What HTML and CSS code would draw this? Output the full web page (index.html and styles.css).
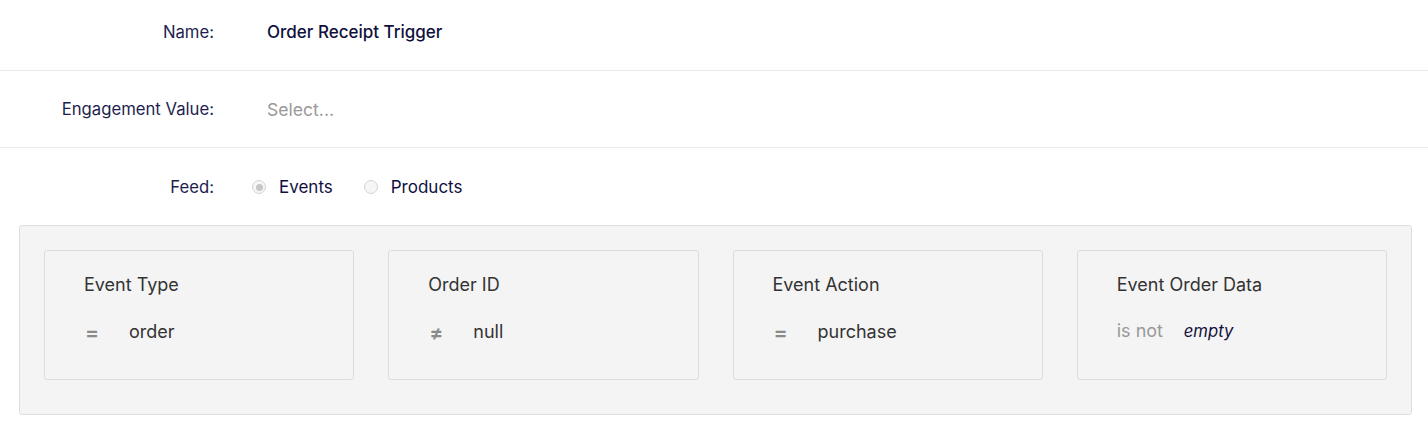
FILE: index.html
```html
<!DOCTYPE html>
<html>
<head>
<meta charset="utf-8">
<link rel="stylesheet" href="styles.css">
</head>
<body>
<div class="form">
  <div class="row row-name">
    <div class="label">Name:</div>
    <div class="value strong">Order Receipt Trigger</div>
  </div>
  <div class="row row-eng">
    <div class="label">Engagement Value:</div>
    <div class="value placeholder">Select...</div>
  </div>
  <div class="row row-feed">
    <div class="label">Feed:</div>
    <div class="value radios">
      <label class="radio"><span class="dot checked"></span>Events</label>
      <label class="radio"><span class="dot"></span>Products</label>
    </div>
  </div>
  <div class="panel">
    <div class="card">
      <div class="title">Event Type</div>
      <div class="cond"><span class="op">=</span><span class="val">order</span></div>
    </div>
    <div class="card">
      <div class="title">Order ID</div>
      <div class="cond"><span class="op">≠</span><span class="val">null</span></div>
    </div>
    <div class="card">
      <div class="title">Event Action</div>
      <div class="cond"><span class="op">=</span><span class="val">purchase</span></div>
    </div>
    <div class="card">
      <div class="title">Event Order Data</div>
      <div class="cond"><span class="op word">is not</span><span class="val em">empty</span></div>
    </div>
  </div>
</div>
</body>
</html>
```
FILE: styles.css
```css
* { box-sizing: border-box; }
body {
  margin: 0;
  background: #fff;
  font-family: Inter, "Noto Sans", sans-serif;
  color: #1c1c4c;
}
.row {
  display: grid;
  grid-template-columns: 214px 1fr;
  column-gap: 53px;
  align-items: center;
  border-bottom: 1px solid #e9e9e9;
}
.row-name { height: 71px; padding-bottom: 6px; }
.row-eng { height: 77px; }
.row-feed { border-bottom: none; height: 77px; padding-bottom: 0; align-items: start; padding-top: 29px; }
.label {
  text-align: right;
  font-size: 16.7px;
  color: #1e1e50;
}
.value { font-size: 17px; }
.strong { font-weight: 500; color: #10103e; }
.placeholder { color: #999; font-size: 17.6px; }
.radios { display: flex; gap: 31px; margin-left: -15px; font-size: 17px; color: #10103e; }
.radio { display: flex; align-items: center; gap: 13px; }
.dot {
  width: 14px; height: 14px; border-radius: 50%;
  border: 1px solid #d4d4d4; background: #f6f6f6;
  display: inline-block; position: relative;
}
.dot.checked::after {
  content: ""; position: absolute; left: 2.5px; top: 2.5px;
  width: 7px; height: 7px; border-radius: 50%; background: #c6c6c6;
}
.panel {
  margin: 0 16px 0 19px;
  background: #f4f4f4;
  border: 1px solid #dedede;
  border-radius: 3px;
  padding: 24px 24px 34px;
  display: grid;
  grid-template-columns: repeat(4, 1fr);
  column-gap: 34px;
}
.card {
  border: 1px solid #dcdcdc;
  border-radius: 3px;
  height: 130px;
  padding: 23px 39px 0;
  color: #333;
}
.title { font-size: 18px; color: #333; }
.cond { display: flex; align-items: baseline; margin-top: 25px; font-size: 18px; line-height: 22px; }
.op { width: 45px; color: #8a8a8a; font-size: 21px; line-height: 22px; font-weight: 600; position: relative; top: 2px; padding-left: 1px; }
.op.word { width: 67px; font-size: 18px; font-weight: 400; color: #999; top: 0; padding-left: 0; }
.val { color: #333; }
.em { font-style: italic; font-size: 16.7px; color: #10103e; }
```
